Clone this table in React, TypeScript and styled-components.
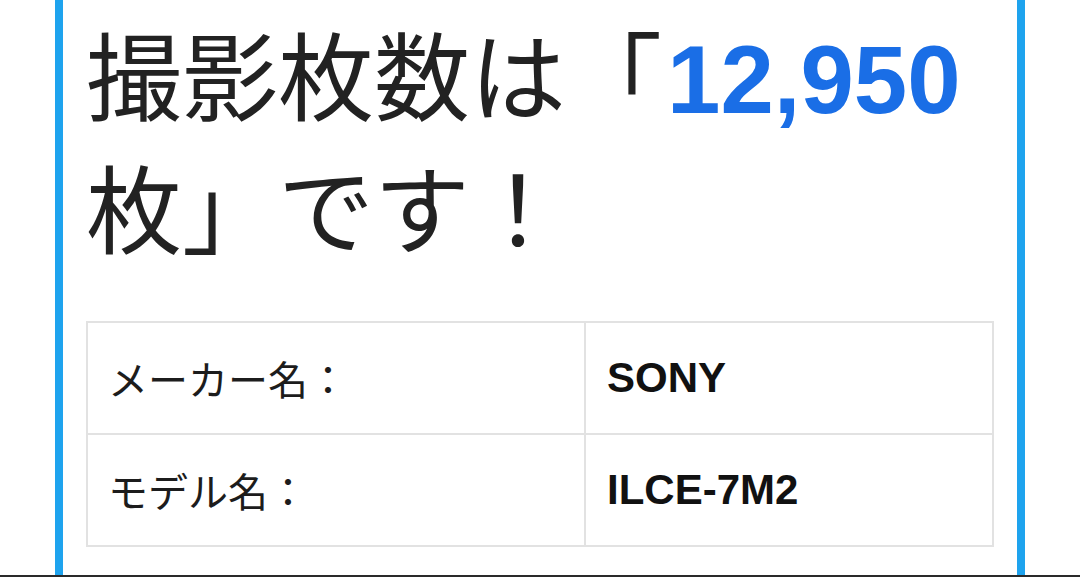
import React from 'react';
import styled, { createGlobalStyle } from 'styled-components';

const SPECS = [
  { label: 'メーカー名：', value: 'SONY' },
  { label: 'モデル名：', value: 'ILCE-7M2' },
];

const GlobalStyle = createGlobalStyle`
  html, body {
    margin: 0;
    padding: 0;
    background: #ffffff;
  }

  body {
    font-family: 'Noto Sans CJK JP', 'Noto Sans', sans-serif;
    color: #222222;
  }
`;

export default function App() {
  return (
    <>
      <GlobalStyle />
      <Page>
        <Card>
          <Headline>
            撮影枚数は「<Count>12,950</Count>枚」です！
          </Headline>
          <SpecTable>
            <tbody>
              {SPECS.map((spec) => (
                <tr key={spec.label}>
                  <LabelCell>{spec.label}</LabelCell>
                  <ValueCell>{spec.value}</ValueCell>
                </tr>
              ))}
            </tbody>
          </SpecTable>
        </Card>
        <BottomRule />
      </Page>
    </>
  );
}

const Page = styled.div`
  height: 577px;
  display: flex;
  flex-direction: column;
  overflow: hidden;
`;

const Card = styled.section`
  flex: 1;
  margin: 0 55px;
  padding: 9px 23px 0;
  border-left: 8px solid #1ea3ee;
  border-right: 8px solid #1ea3ee;
  background: #ffffff;
`;

const Headline = styled.h1`
  margin: 0;
  font-size: 96px;
  line-height: 125px;
  font-weight: 400;
  color: #222222;
  font-family: 'Noto Sans CJK JP', sans-serif;
`;

const Count = styled.span`
  margin-left: 5px;
  font-family: 'Liberation Sans', Arial, sans-serif;
  font-weight: 700;
  color: #1a6ee6;
`;

const SpecTable = styled.table`
  width: 100%;
  margin-top: 54px;
  border-collapse: collapse;
  border: 2px solid #e2e2e2;
`;

const LabelCell = styled.th`
  width: 476px;
  height: 110px;
  padding: 0 0 0 20px;
  border: 2px solid #e2e2e2;
  text-align: left;
  font-weight: 400;
  font-size: 40px;
  color: #1c1c1c;
  font-family: 'Noto Sans CJK JP', sans-serif;
`;

const ValueCell = styled.td`
  height: 110px;
  padding: 0 0 0 21px;
  border: 2px solid #e2e2e2;
  font-size: 42px;
  font-weight: 700;
  color: #111111;
  font-family: 'Liberation Sans', Arial, sans-serif;
`;

const BottomRule = styled.div`
  height: 2px;
  background: #2a2a2a;
`;
